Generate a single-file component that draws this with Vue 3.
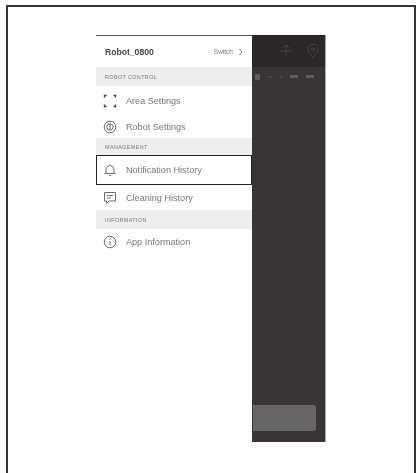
<script setup>
const groups = [
  { label: 'ROBOT CONTROL', rows: [
    { text: 'Area Settings', icon: 'area', h: 29 },
    { text: 'Robot Settings', icon: 'robot', h: 23 },
  ]},
  { label: 'MANAGEMENT', labelH: 17, rows: [
    { text: 'Notification History', icon: 'bell', h: 30, active: true },
    { text: 'Cleaning History', icon: 'chat', h: 25 },
  ]},
  { label: 'INFORMATION', rows: [
    { text: 'App Information', icon: 'info', h: 26 },
  ]},
]
</script>

<template>
  <div class="page">
    <div class="frame">
      <div class="phone">
        <aside class="drawer">
          <header class="head">
            <span class="name">Robot_0800</span>
            <span class="switch">Switch
              <svg width="5" height="8" viewBox="0 0 5 8"><path d="M1 .8 4 4 1 7.2" fill="none" stroke="#777" stroke-width=".9"/></svg>
            </span>
          </header>
          <section v-for="g in groups" :key="g.label">
            <div class="label" :style="{ height: (g.labelH || 19) + 'px' }">{{ g.label }}</div>
            <div v-for="r in g.rows" :key="r.text" class="row" :class="{ active: r.active }" :style="{ height: r.h + 'px' }">
              <svg class="icon" width="14" height="14" viewBox="0 0 14 14" fill="none" stroke="#6a6a6a" stroke-width="1">
                <template v-if="r.icon === 'area'">
                  <path d="M1.5 3.5V1.5h2M10.5 1.5h2v2M12.5 10.5v2h-2M3.5 12.5h-2v-2" stroke-width="1.4" stroke="#444"/>
                </template>
                <template v-else-if="r.icon === 'robot'">
                  <circle cx="7" cy="7" r="5.8"/><circle cx="7" cy="7" r="3.2"/><path d="M7 4v6"/>
                </template>
                <template v-else-if="r.icon === 'bell'">
                  <path d="M3 10.5V6.5a4 4 0 0 1 8 0v4M1.5 10.5h11M5.8 12.6h2.4"/>
                </template>
                <template v-else-if="r.icon === 'chat'">
                  <path d="M1.5 1.5h11v8.5H6L3.5 12.5V10h-2zM4 4.5h6M4 7h4"/>
                </template>
                <template v-else>
                  <circle cx="7" cy="7" r="5.8"/><path d="M7 6.2v4M7 4v1"/>
                </template>
              </svg>
              <span class="text">{{ r.text }}</span>
            </div>
          </section>
        </aside>
        <div class="dark">
          <div class="top">
            <svg width="14" height="14" viewBox="0 0 14 14" fill="none" stroke="#484544" stroke-width="1"><path d="M7 1v12M1 7h12M4 4l3-3 3 3"/></svg>
            <svg width="12" height="15" viewBox="0 0 12 15" fill="none" stroke="#484544" stroke-width="1"><path d="M6 14 1.5 7.5a5 5 0 1 1 9 0z"/><circle cx="6" cy="5.5" r="1.5"/></svg>
          </div>
          <div class="status">
            <i class="d a"></i><i class="d b"></i><i class="d c"></i><i class="d e"></i><i class="d e"></i>
          </div>
          <div class="fill"></div>
          <div class="bar"></div>
        </div>
      </div>
    </div>
  </div>
</template>

<style scoped>
.page {
  width: 418px;
  height: 473px;
  overflow: hidden;
  background: #fff;
  padding: 5px 2px 0 6px;
  box-sizing: border-box;
  font-family: "Liberation Sans", Arial, sans-serif;
}
.frame {
  height: 480px;
  box-sizing: border-box;
  border: 2px solid #333;
  border-bottom: 0;
  padding: 28px 0 0 88px;
  filter: blur(0.7px);
}
.phone {
  display: flex;
  width: 230px;
  height: 407px;
}
.drawer {
  width: 156px;
  flex: none;
  border-top: 1px solid #555;
  box-sizing: border-box;
}
.head {
  height: 31px;
  display: flex;
  align-items: center;
  justify-content: space-between;
  padding: 0 9px 0 9px;
}
.name {
  font-size: 8.6px;
  font-weight: 700;
  color: #444;
}
.switch {
  display: flex;
  align-items: center;
  gap: 5px;
  font-size: 6.5px;
  color: #777;
}
.label {
  background: #eeeeee;
  display: flex;
  align-items: center;
  padding-left: 9px;
  font-size: 5.4px;
  letter-spacing: .4px;
  color: #777;
}
.row {
  display: flex;
  align-items: center;
  padding-left: 7px;
  gap: 9px;
  box-sizing: border-box;
}
.row.active {
  border: 1px solid #222;
  padding-left: 6px;
}
.icon { flex: none; }
.text {
  font-size: 9.1px;
  color: #777;
}
.dark {
  flex: 1;
  display: flex;
  flex-direction: column;
  background: #393534;
  border-right: 1px solid #aaa;
}
.top {
  height: 32px;
  flex: none;
  background: #2a2726;
  display: flex;
  align-items: center;
  justify-content: flex-end;
  gap: 14px;
  padding-right: 6px;
}
.status {
  display: flex;
  align-items: center;
  height: 19px;
  padding-left: 3px;
  gap: 8px;
}
.d {
  display: block;
  height: 3px;
  background: #5f5c5b;
}
.d.a { width: 5px; height: 6px; }
.d.b { width: 4px; height: 2px; background: #4a4746; }
.d.c { width: 2px; height: 2px; background: #4a4746; }
.d.e { width: 8px; }
.fill {
  flex: 1;
}
.bar {
  height: 26px;
  margin: 0 9px 11px 1px;
  flex: none;
  background: #686665;
  border-radius: 0 3px 3px 0;
}
</style>
